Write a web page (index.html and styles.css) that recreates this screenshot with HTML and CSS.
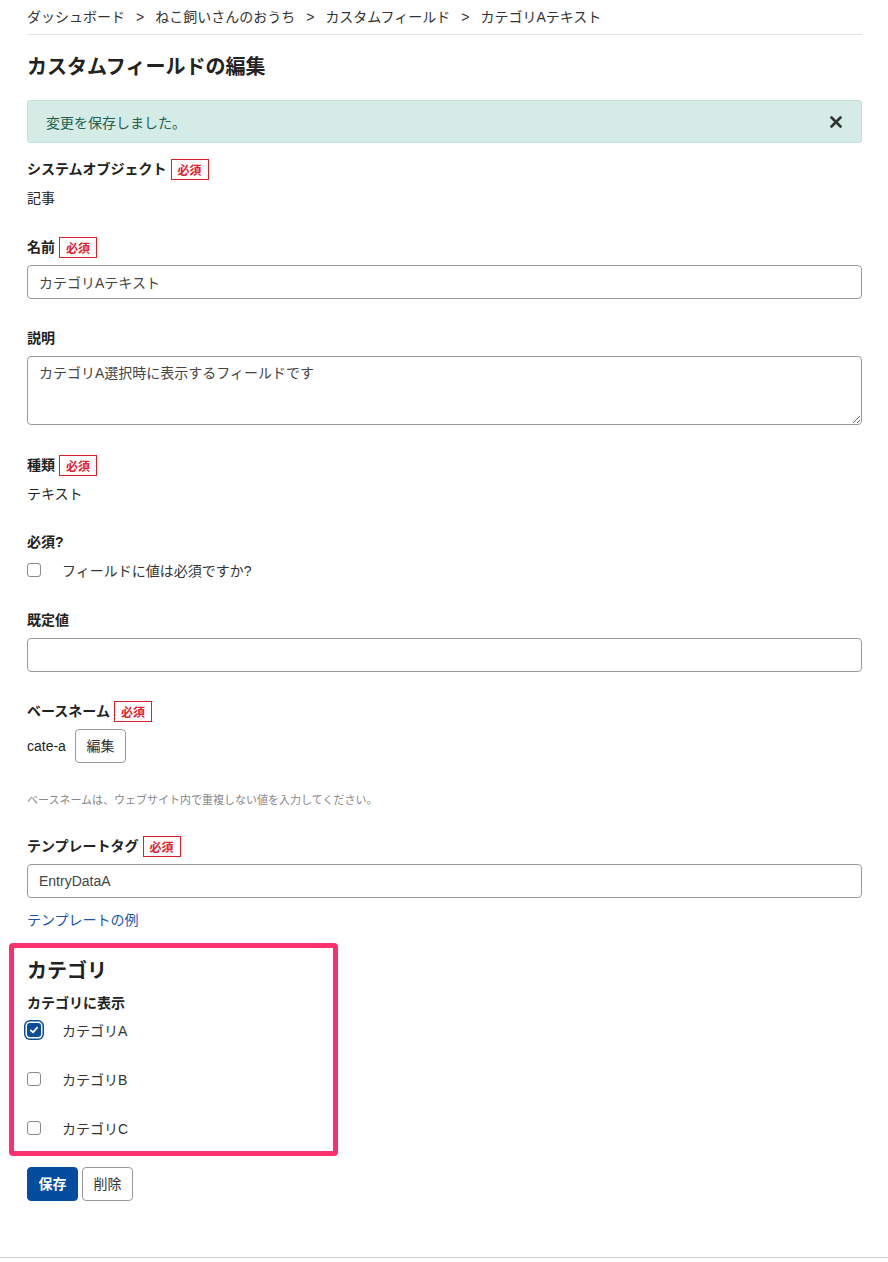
FILE: index.html
```html
<!DOCTYPE html>
<html lang="ja">
<head>
<meta charset="utf-8">
<title>カスタムフィールドの編集</title>
<link rel="stylesheet" href="styles.css">
</head>
<body>
<div class="page">
  <nav class="breadcrumb">
    <span>ダッシュボード</span><span class="sep">&gt;</span>
    <span>ねこ飼いさんのおうち</span><span class="sep">&gt;</span>
    <span>カスタムフィールド</span><span class="sep">&gt;</span>
    <span>カテゴリAテキスト</span>
  </nav>

  <h1 class="title">カスタムフィールドの編集</h1>

  <div class="alert">
    <span>変更を保存しました。</span>
    <svg class="alert-close" width="12" height="12" viewBox="0 0 12 12"><path d="M1.5 1.5 L10.5 10.5 M10.5 1.5 L1.5 10.5" stroke="#333" stroke-width="2.6" stroke-linecap="round"/></svg>
  </div>

  <div class="form">
    <div class="field">
      <div class="label-row"><span class="label">システムオブジェクト</span><span class="badge">必須</span></div>
      <div class="value">記事</div>
    </div>

    <div class="field">
      <div class="label-row"><span class="label">名前</span><span class="badge">必須</span></div>
      <input class="input" type="text" value="カテゴリAテキスト">
    </div>

    <div class="field">
      <div class="label-row"><span class="label">説明</span></div>
      <textarea class="textarea">カテゴリA選択時に表示するフィールドです</textarea>
    </div>

    <div class="field">
      <div class="label-row"><span class="label">種類</span><span class="badge">必須</span></div>
      <div class="value">テキスト</div>
    </div>

    <div class="field">
      <div class="label-row"><span class="label">必須?</span></div>
      <div class="check-row"><span class="check"></span><span>フィールドに値は必須ですか?</span></div>
    </div>

    <div class="field">
      <div class="label-row"><span class="label">既定値</span></div>
      <input class="input" type="text" value="">
    </div>

    <div class="field">
      <div class="label-row"><span class="label">ベースネーム</span><span class="badge">必須</span></div>
      <div class="basename-row"><span>cate-a</span><button class="btn" type="button">編集</button></div>
      <p class="hint">ベースネームは、ウェブサイト内で重複しない値を入力してください。</p>
    </div>

    <div class="field">
      <div class="label-row"><span class="label">テンプレートタグ</span><span class="badge">必須</span></div>
      <input class="input" type="text" value="EntryDataA">
      <a class="link" href="#">テンプレートの例</a>
    </div>

    <section class="category-box">
      <h2 class="category-title">カテゴリ</h2>
      <div class="label sub-label">カテゴリに表示</div>
      <div class="check-row cat-row"><span class="check check--on"><svg width="14" height="14" viewBox="0 0 14 14"><path d="M3.8 7.3 L6 9.4 L10.2 4.6" fill="none" stroke="#fff" stroke-width="1.8" stroke-linecap="round" stroke-linejoin="round"/></svg></span><span>カテゴリA</span></div>
      <div class="check-row cat-row"><span class="check"></span><span>カテゴリB</span></div>
      <div class="check-row cat-row"><span class="check"></span><span>カテゴリC</span></div>
    </section>

    <div class="actions">
      <button class="btn btn--primary" type="button">保存</button>
      <button class="btn" type="button">削除</button>
    </div>
  </div>
</div>
<footer class="footer"></footer>
</body>
</html>
```

FILE: styles.css
```css
* { box-sizing: border-box; }

html, body {
  margin: 0;
  padding: 0;
  background: #fff;
}

body {
  font-family: "Liberation Sans", "Noto Sans CJK JP", sans-serif;
  font-size: 14px;
  color: #222;
  min-height: 100vh;
  display: flex;
  flex-direction: column;
}

.page {
  flex: 1 0 auto;
  padding: 0 26px 0 27px;
}

.breadcrumb {
  display: flex;
  align-items: center;
  height: 35px;
  padding-bottom: 1px;
  line-height: 20px;
  font-size: 14px;
  color: #333;
  border-bottom: 1px solid #e2e2e2;
}

.breadcrumb .sep {
  margin: 0 11px;
}

.title {
  margin: 18px 0 0;
  height: 28px;
  font-size: 20px;
  line-height: 28px;
  font-weight: 700;
  color: #222;
}

.alert {
  margin-top: 19px;
  display: flex;
  align-items: center;
  justify-content: space-between;
  height: 43px;
  padding: 0 19px 0 18px;
  background: #d4ebe6;
  border: 1px solid #c3e1da;
  border-radius: 3px;
  color: #245f50;
  font-size: 14px;
}

.alert-close {
  display: block;
}

.form {
  margin-top: 16px;
}

.field + .field {
  margin-top: 29.5px;
}

.label-row {
  display: flex;
  align-items: center;
  height: 21px;
  gap: 4px;
}

.label {
  font-weight: 700;
  font-size: 14px;
  color: #222;
  line-height: 21px;
}

.badge {
  display: inline-flex;
  align-items: center;
  height: 21px;
  padding: 0 6px;
  border: 1px solid #d8232f;
  color: #e2202d;
  font-size: 12px;
  font-weight: 700;
}

.value {
  margin-top: 7px;
  height: 20px;
  display: flex;
  align-items: center;
  color: #222;
}

.input {
  display: block;
  width: 100%;
  margin-top: 7px;
  height: 34px;
  padding: 0 11px;
  border: 1px solid #9a9a9a;
  border-radius: 4px;
  font-family: "Liberation Sans", "Noto Sans CJK JP", sans-serif;
  font-size: 14px;
  color: #444;
  background: #fff;
}

.textarea {
  display: block;
  width: 100%;
  margin-top: 7px;
  height: 69px;
  padding: 6px 11px;
  border: 1px solid #9a9a9a;
  border-radius: 4px;
  font-family: "Liberation Sans", "Noto Sans CJK JP", sans-serif;
  font-size: 14px;
  line-height: 20px;
  color: #444;
  resize: vertical;
}

.check-row {
  display: flex;
  align-items: center;
  gap: 21px;
  height: 20px;
  margin-top: 7px;
  color: #333;
}

.check {
  flex: none;
  width: 14px;
  height: 14px;
  border: 1px solid #8a8a8a;
  border-radius: 3px;
  background: #fff;
}

.check--on {
  border: none;
  background: #0b4c9c;
  box-shadow: 0 0 0 1.5px #fff, 0 0 0 3px #0b4c9c;
}

.check--on svg {
  display: block;
}

.basename-row {
  display: flex;
  align-items: center;
  gap: 9px;
  height: 34px;
  margin-top: 7px;
  color: #222;
}

.btn {
  height: 34px;
  padding: 0 10.5px;
  border: 1px solid #9a9a9a;
  border-radius: 4px;
  background: #fff;
  color: #333;
  font-family: "Liberation Sans", "Noto Sans CJK JP", sans-serif;
  font-size: 14px;
  line-height: 20px;
}

.btn--primary {
  background: #034c9e;
  border-color: #034c9e;
  color: #fff;
  font-weight: 700;
}

.hint {
  margin: 27.5px 0 0;
  height: 16px;
  display: flex;
  align-items: center;
  font-size: 11px;
  color: #888;
}

.link {
  display: flex;
  align-items: center;
  width: max-content;
  height: 20px;
  margin-top: 10.5px;
  color: #1a56b0;
  text-decoration: none;
}

.category-box {
  margin: 14px 0 0 -18px;
  width: 329px;
  padding: 8px 13px 13px;
  border: 5px solid #fe2f6f;
  border-radius: 4px;
}

.category-title {
  margin: 0;
  height: 28px;
  display: flex;
  align-items: center;
  font-size: 20px;
  font-weight: 700;
  color: #222;
}

.sub-label {
  margin-top: 10px;
  height: 20px;
  display: flex;
  align-items: center;
}

.cat-row {
  margin-top: 6px;
}

.cat-row + .cat-row {
  margin-top: 29px;
}

.actions {
  display: flex;
  gap: 4px;
  margin-top: 11.5px;
}

.footer {
  margin-top: auto;
  height: 5px;
  border-top: 1px solid #cfcfcf;
}
```
